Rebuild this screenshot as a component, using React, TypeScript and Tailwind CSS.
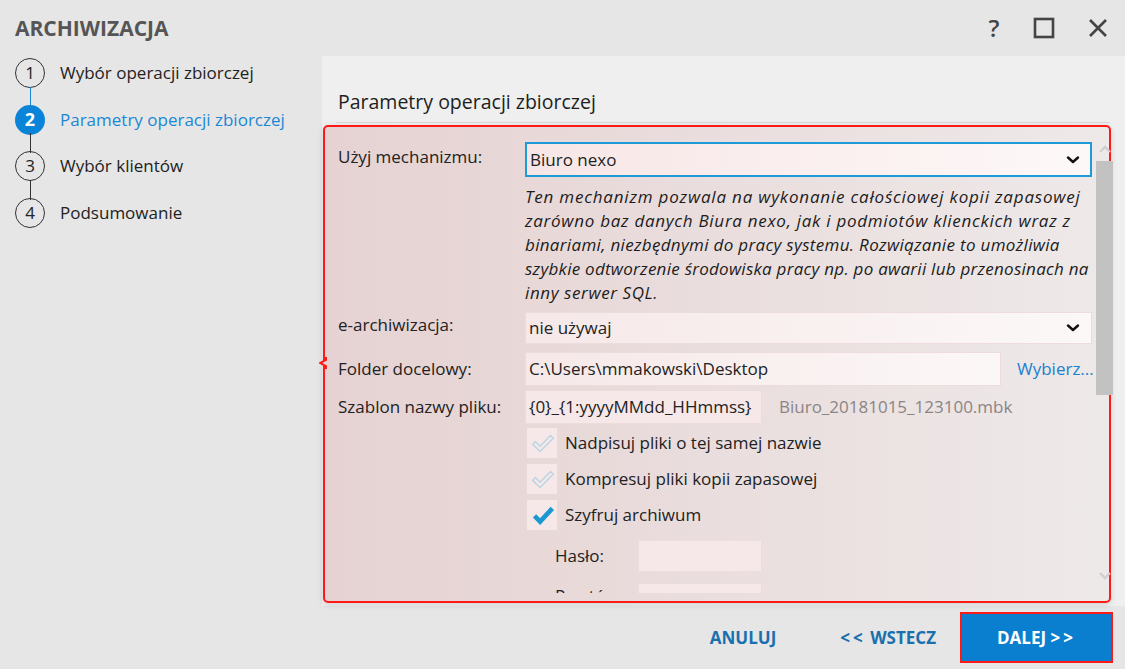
import React from "react";

const font = { fontFamily: '"Open Sans", "Noto Sans", sans-serif' };

function Chevron({ className = "" }: { className?: string }) {
  return (
    <svg width="14" height="10" viewBox="0 0 14 10" className={className}>
      <path d="M2 2.5 L7 7 L12 2.5" fill="none" stroke="#111" strokeWidth="2.4" strokeLinecap="round" strokeLinejoin="round" />
    </svg>
  );
}

function Check({ solid }: { solid: boolean }) {
  return (
    <div className="w-[32px] h-[32px] shrink-0 bg-[#f6e8e8] border border-[#e9dada] flex items-center justify-center">
      <svg width="32" height="32" viewBox="0 0 32 32">
        {solid ? (
          <path d="M8 17 L14 23 L27 9" fill="none" stroke="#1a98d2" strokeWidth="5" strokeLinejoin="miter" />
        ) : (
          <polygon points="6,17.5 9,14.5 14,19.5 25,8 28,11 14,25" fill="none" stroke="#bcd5e4" strokeWidth="1.6" strokeLinejoin="round" />
        )}
      </svg>
    </div>
  );
}

function Step({ n, label, active }: { n: number; label: string; active?: boolean }) {
  return (
    <div className="flex items-center h-[28px]">
      <div
        className={
          active
            ? "w-[30px] h-[30px] shrink-0 rounded-full bg-[#0a84d8] text-white font-bold flex items-center justify-center text-[18px]"
            : "w-[30px] h-[30px] shrink-0 rounded-full border-[1.5px] border-[#333] text-[#222] flex items-center justify-center text-[17px]"
        }
      >
        {n}
      </div>
      <span className={active ? "ml-[15px] text-[17px] text-[#1b86d6] whitespace-nowrap" : "ml-[15px] text-[17px] text-[#222] whitespace-nowrap"}>{label}</span>
    </div>
  );
}

export default function App() {
  return (
    <div className="w-[1125px] h-[669px] bg-[#e6e6e6] flex flex-col overflow-hidden" style={font}>
      {/* title bar */}
      <div className="h-[56px] shrink-0 flex items-center pl-[15px] pr-[16px]">
        <div className="text-[21px] font-bold text-[#555] pt-[2px]">ARCHIWIZACJA</div>
        <div className="ml-auto flex items-center">
          <span className="text-[24px] text-[#444] font-semibold w-[24px] text-center mr-[27px]">?</span>
          <svg width="22" height="22" viewBox="0 0 22 22" className="mr-[32px]">
            <rect x="2" y="2" width="18" height="18" fill="none" stroke="#444" strokeWidth="2.6" />
          </svg>
          <svg width="22" height="22" viewBox="0 0 22 22">
            <path d="M3 3 L19 19 M19 3 L3 19" stroke="#444" strokeWidth="2.6" />
          </svg>
        </div>
      </div>

      <div className="flex flex-1 min-h-0">
        {/* sidebar */}
        <div className="w-[322px] shrink-0 pl-[15px] pt-[3px]">
          <div className="relative flex flex-col gap-[18.5px]">
            <div className="absolute left-[14.5px] top-[28px] w-[1.5px] h-[20px] bg-[#1b86d6]" />
            <div className="absolute left-[14.5px] top-[74px] w-[1.5px] h-[20px] bg-[#333]" />
            <div className="absolute left-[14.5px] top-[121px] w-[1.5px] h-[20px] bg-[#333]" />
            <Step n={1} label="Wybór operacji zbiorczej" />
            <Step n={2} label="Parametry operacji zbiorczej" active />
            <Step n={3} label="Wybór klientów" />
            <Step n={4} label="Podsumowanie" />
          </div>
        </div>

        {/* main panel */}
        <div className="flex-1 min-w-0 bg-[#efefef] flex flex-col relative">
          <div className="pl-[16px] pt-[31px] h-[66px]">
            <div className="text-[19.5px] text-[#1e1e1e]">Parametry operacji zbiorczej</div>
          </div>
          <div className="ml-[14px] mr-[15px] h-[1px] bg-[#d8d8d8]" />

          <div className="relative ml-[1px] mr-[14px] mt-[2px] h-[478px] rounded-[5px] border-2 border-[#ff1a1a] bg-gradient-to-r from-[#e6d2d2] to-[#eee9e9] shadow-[0_2px_6px_rgba(0,0,0,0.12)]">
            <svg width="8" height="12" viewBox="0 0 8 12" className="absolute left-[-6px] top-[230px]">
              <path d="M7 0 L7 3 L1 6 L7 9 L7 12" fill="#e6d2d2" stroke="#ff1a1a" strokeWidth="2" />
            </svg>
            <div className="h-[466px] overflow-hidden pl-[13px] pr-[17px] pt-[15px] text-[17px] text-[#222]">
              {/* row 1 */}
              <div className="flex">
                <div className="w-[187px] shrink-0 pt-[2px]">Użyj mechanizmu:</div>
                <div className="flex-1 h-[35px] border-2 border-[#1e9ad8] bg-gradient-to-r from-[#f8e6e6] to-[#fdf8f8] flex items-center pl-[3px] pr-[10px]">
                  <span>Biuro nexo</span>
                  <Chevron className="ml-auto" />
                </div>
              </div>
              <div className="ml-[187px] mt-[8px] italic leading-[24px] text-[17px] text-[#1c1c1c] whitespace-nowrap flex flex-col">
                <span className="tracking-[0.8px]">Ten mechanizm pozwala na wykonanie całościowej kopii zapasowej</span>
                <span className="tracking-[0.72px]">zarówno baz danych Biura nexo, jak i podmiotów klienckich wraz z</span>
                <span className="tracking-[0.32px]">binariami, niezbędnymi do pracy systemu. Rozwiązanie to umożliwia</span>
                <span className="tracking-[0.26px]">szybkie odtworzenie środowiska pracy np. po awarii lub przenosinach na</span>
                <span className="tracking-[0.6px]">inny serwer SQL.</span>
              </div>
              {/* row 2 */}
              <div className="flex mt-[7px]">
                <div className="w-[187px] shrink-0">e-archiwizacja:</div>
                <div className="flex-1 h-[32px] border border-[#eddcdc] bg-gradient-to-r from-[#f6e8e8] to-[#fcf8f8] flex items-center pl-[3px] pr-[11px]">
                  <span>nie używaj</span>
                  <Chevron className="ml-auto" />
                </div>
              </div>
              {/* row 3 */}
              <div className="flex mt-[8px] items-center">
                <div className="w-[187px] shrink-0">Folder docelowy:</div>
                <div className="w-[476px] shrink-0 h-[34px] border border-[#eddcdc] bg-gradient-to-r from-[#f6e8e8] to-[#fcf7f7] flex items-center pl-[3px]">
                  C:\Users\mmakowski\Desktop
                </div>
                <div className="ml-[16px] text-[#1a80d0] whitespace-nowrap">Wybierz...</div>
              </div>
              {/* row 4 */}
              <div className="flex mt-[4px] items-center">
                <div className="w-[187px] shrink-0">Szablon nazwy pliku:</div>
                <div className="w-[237px] shrink-0 h-[34px] border border-[#eddcdc] bg-[#f6e8e8] flex items-center pl-[3px] whitespace-nowrap">
                  {"{0}_{1:yyyyMMdd_HHmmss}"}
                </div>
                <div className="ml-[17px] text-[#8a8585]">Biuro_20181015_123100.mbk</div>
              </div>
              {/* checkboxes */}
              <div className="ml-[188px] mt-[3px] flex flex-col gap-[4px]">
                <div className="flex items-center">
                  <Check solid={false} />
                  <span className="ml-[7px]">Nadpisuj pliki o tej samej nazwie</span>
                </div>
                <div className="flex items-center">
                  <Check solid={false} />
                  <span className="ml-[7px]">Kompresuj pliki kopii zapasowej</span>
                </div>
                <div className="flex items-center">
                  <Check solid />
                  <span className="ml-[7px]">Szyfruj archiwum</span>
                </div>
              </div>
              <div className="ml-[217px] mt-[9px] flex items-center">
                <div className="w-[83px] shrink-0">Hasło:</div>
                <div className="w-[124px] h-[32px] border border-[#eddcdc] bg-[#f6e8e8]" />
              </div>
              <div className="ml-[217px] mt-[11px] flex items-start">
                <div className="w-[83px] shrink-0 pt-[3px] leading-[20px]">Powtórz:</div>
                <div className="w-[124px] h-[32px] border border-[#eddcdc] bg-[#f6e8e8]" />
              </div>
            </div>
          </div>

          {/* scrollbar */}
          <div className="absolute right-[12px] top-[84px] w-[17px] h-[450px] flex flex-col items-center">
            <svg width="14" height="10" viewBox="0 0 14 10" className="mt-[4px]">
              <path d="M2 8 L7 3 L12 8" fill="none" stroke="#cfcfcf" strokeWidth="2.4" />
            </svg>
            <div className="mt-[7px] w-[17px] h-[234px] bg-[#c2c2c2]" />
            <svg width="14" height="10" viewBox="0 0 14 10" className="mt-[176px]">
              <path d="M2 2 L7 7 L12 2" fill="none" stroke="#cfcfcf" strokeWidth="2.4" />
            </svg>
          </div>
        </div>
      </div>

      {/* footer */}
      <div className="h-[63px] shrink-0 flex items-center justify-end pr-[12px]">
        <button className="text-[17px] font-bold text-[#1a70ad] mr-[64px]">ANULUJ</button>
        <button className="text-[17px] font-bold text-[#1a70ad] mr-[24px]">
          <span className="tracking-[3px]">&lt;&lt;</span> WSTECZ
        </button>
        <button className="w-[153px] h-[51px] bg-[#0a7fd0] border-2 border-[#ff1a1a] text-white font-bold text-[17px]">
          DALEJ <span className="tracking-[3px]">&gt;&gt;</span>
        </button>
      </div>
    </div>
  );
}
